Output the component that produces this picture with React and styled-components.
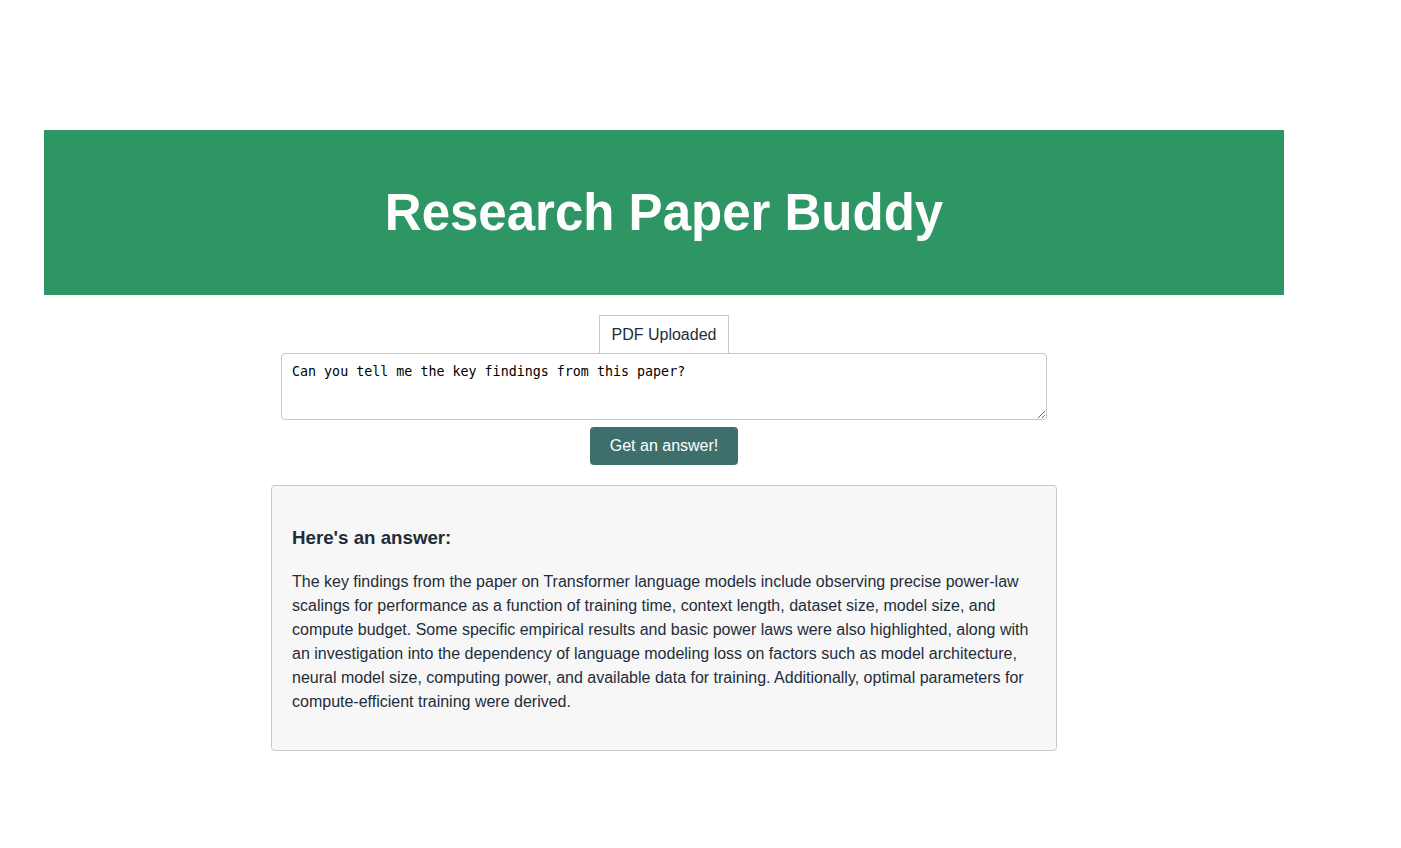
import React from "react";
import styled, { createGlobalStyle } from "styled-components";

const Global = createGlobalStyle`
  html, body { margin: 0; padding: 0; background: #fff; }
  body { font-family: "Liberation Sans", Arial, sans-serif; color: #1f2d3a; }
`;

const Page = styled.div`
  width: 1240px;
  margin-left: 44px;
  padding-top: 130px;
  padding-bottom: 96px;
  display: flex;
  flex-direction: column;
  align-items: center;
`;

const Header = styled.header`
  align-self: stretch;
  height: 165px;
  background: #2e9664;
  display: flex;
  align-items: center;
  justify-content: center;
`;

const Title = styled.h1`
  margin: 0;
  color: #fff;
  font-size: 51px;
  font-weight: 700;
`;

const Form = styled.div`
  margin-top: 20px;
  display: flex;
  flex-direction: column;
  align-items: center;
`;

const Status = styled.div`
  box-sizing: border-box;
  height: 38px;
  padding: 0 12px;
  border: 1px solid #c8c8c8;
  border-bottom: none;
  display: flex;
  align-items: center;
  font-size: 16px;
  color: #1f2d3a;
`;

const Question = styled.textarea`
  box-sizing: border-box;
  width: 766px;
  height: 67px;
  padding: 10px;
  border: 1px solid #c8c8c8;
  border-radius: 4px;
  font-family: "DejaVu Sans Mono", monospace;
  font-size: 13.333px;
  line-height: 16px;
  color: #000;
  resize: vertical;
  outline: none;
`;

const Button = styled.button`
  margin-top: 7px;
  width: 148px;
  height: 38px;
  border: none;
  border-radius: 4px;
  background: #3f6f6c;
  color: #fff;
  font-family: "Liberation Sans", Arial, sans-serif;
  font-size: 16px;
  cursor: pointer;
`;

const Answer = styled.section`
  box-sizing: border-box;
  margin-top: 20px;
  width: 786px;
  padding: 30px 20px 36px;
  background: #f7f7f7;
  border: 1px solid #c8c8c8;
  border-radius: 4px;
`;

const AnswerTitle = styled.h3`
  margin: 11px 0 21px;
  font-size: 18.72px;
  font-weight: 700;
  color: #1f2d3a;
`;

const AnswerText = styled.p`
  margin: 0;
  font-size: 16px;
  line-height: 24px;
  color: #1f2d3a;
`;

export default function App() {
  return (
    <>
      <Global />
      <Page>
        <Header>
          <Title>Research Paper Buddy</Title>
        </Header>
        <Form>
          <Status>PDF Uploaded</Status>
          <Question defaultValue="Can you tell me the key findings from this paper?" />
          <Button>Get an answer!</Button>
        </Form>
        <Answer>
          <AnswerTitle>Here's an answer:</AnswerTitle>
          <AnswerText>
            The key findings from the paper on Transformer language models include observing precise power-law
            scalings for performance as a function of training time, context length, dataset size, model size, and
            compute budget. Some specific empirical results and basic power laws were also highlighted, along with
            an investigation into the dependency of language modeling loss on factors such as model architecture,
            neural model size, computing power, and available data for training. Additionally, optimal parameters for
            compute-efficient training were derived.
          </AnswerText>
        </Answer>
      </Page>
    </>
  );
}
